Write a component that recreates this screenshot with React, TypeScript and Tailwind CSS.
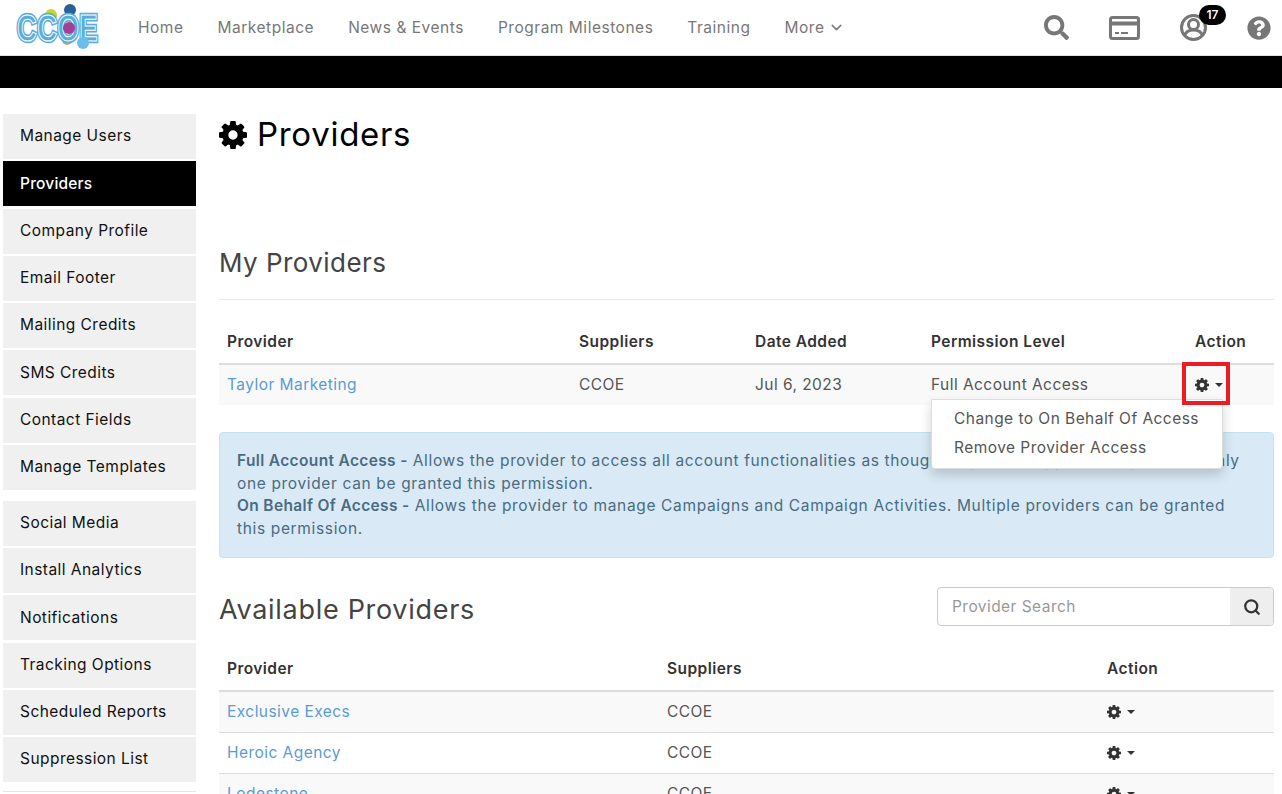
import { ChevronDown, Search } from 'lucide-react';
import { FaSearch, FaQuestionCircle } from 'react-icons/fa';

const navLinks = ['Home', 'Marketplace', 'News & Events', 'Program Milestones', 'Training'];
const sideTop = ['Manage Users', 'Providers', 'Company Profile', 'Email Footer', 'Mailing Credits', 'SMS Credits', 'Contact Fields', 'Manage Templates'];
const sideBottom = ['Social Media', 'Install Analytics', 'Notifications', 'Tracking Options', 'Scheduled Reports', 'Suppression List'];
const available = ['Exclusive Execs', 'Heroic Agency', 'Lodestone'];

function Gear({ className }: { className: string }) {
  return (
    <svg viewBox="128 128 1536 1536" className={className} fill="currentColor" fillRule="evenodd">
      <path d="M1152 896q0-106-75-181t-181-75-181 75-75 181 75 181 181 75 181-75 75-181zm512-109v222q0 12-8 23t-20 13l-185 28q-19 54-39 91 35 50 107 138 10 12 10 25t-9 23q-27 37-99 108t-94 71q-12 0-26-9l-138-108q-44 23-91 38-16 136-29 186-7 28-36 28h-222q-14 0-24.500-8.500t-11.500-21.500l-28-184q-49-16-90-37l-141 107q-10 9-25 9-14 0-25-11-126-114-165-168-7-10-7-23 0-12 8-23 15-21 51-66.500t54-70.500q-27-50-41-99l-183-27q-13-2-21-12.500t-8-23.500v-222q0-12 8-23t19-13l186-28q14-46 39-92-40-57-107-138-10-12-10-24 0-10 9-23 26-36 98.500-107.500t94.500-71.500q13 0 26 10l138 107q44-23 91-38 16-136 29-186 7-28 36-28h222q14 0 24.500 8.500t11.500 21.500l28 184q49 16 90 37l142-107q9-9 24-9 13 0 25 10 129 119 165 170 7 8 7 22 0 12-8 23-15 21-51 66.500t-54 70.500q26 50 41 98l183 28q13 2 21 12.500t8 23.500z" />
    </svg>
  );
}

function Logo() {
  return (
    <svg width="90" height="52" viewBox="0 0 90 52" className="ml-[14px] shrink-0">
      <circle cx="37" cy="13" r="6" fill="#c9d33f" />
      <circle cx="56" cy="8" r="6" fill="#2a6099" />
      <circle cx="53" cy="38" r="5" fill="#c9a25a" />
      <text x="3" y="39" fontFamily="'Liberation Sans', sans-serif" fontSize="37" fontWeight="700" fill="#5badd9" stroke="#5badd9" strokeWidth="4.5" textLength="81" lengthAdjust="spacingAndGlyphs">CCOE</text>
      <text aria-hidden="true" x="3" y="39" fontFamily="'Liberation Sans', sans-serif" fontSize="37" fontWeight="700" fill="none" stroke="#ffffff" strokeWidth="1" textLength="81" lengthAdjust="spacingAndGlyphs">CCOE</text>
      <circle cx="55" cy="26" r="6" fill="#a23f97" />
      <circle cx="69" cy="41" r="6" fill="#6bbdec" />
    </svg>
  );
}

function SideItem({ label, active }: { label: string; active?: boolean }) {
  return (
    <a className={`flex h-[45px] mb-[2.25px] items-center pl-[17px] pb-[1px] text-[15.5px] ${active ? 'bg-black text-white font-medium tracking-[0.2px]' : 'bg-[#f0f0f0] text-[#111]'}`}>
      {label}
    </a>
  );
}

function ActionCog() {
  return (
    <span className="flex items-center gap-[6px] text-[#333]">
      <Gear className="w-[14px] h-[14px]" />
      <span className="w-0 h-0 border-x-[4px] border-x-transparent border-t-[4px] border-t-[#333]" />
    </span>
  );
}

export default function App() {
  return (
    <div className="relative h-[794px] overflow-hidden bg-white font-['Inter','Liberation_Sans',sans-serif] tracking-[0.45px] text-[15.5px] text-[#555]">
      <header className="flex h-[56px] items-center border-b border-[#e0e0e0]">
        <Logo />
        <nav className="ml-[34px] flex items-center gap-[34px] tracking-[0.52px] text-[#777]">
          {navLinks.map((n) => (
            <a key={n}>{n}</a>
          ))}
          <a className="flex items-center gap-[3px]">
            More <ChevronDown className="w-[17px] h-[17px]" />
          </a>
        </nav>
        <div className="ml-auto flex items-center text-[#777]">
          <FaSearch className="w-[25px] h-[25px]" />
          <svg width="31" height="24" viewBox="0 0 31 24" className="ml-[40px]" fill="none" stroke="#777" strokeWidth="3">
            <rect x="1.5" y="1.5" width="28" height="21" rx="2" />
            <path d="M2 7.5h27" strokeWidth="4" />
            <path d="M6 17h4M12 17h7" strokeWidth="2" />
          </svg>
          <div className="relative ml-[40px] w-[27px] h-[27px]">
            <svg width="27" height="27" viewBox="0 0 27 27" fill="none" stroke="#777" strokeWidth="3">
              <circle cx="13.5" cy="13.5" r="12" />
              <circle cx="13.5" cy="10.5" r="5" />
              <path d="M4.5 22c1-4 4-6 9-6s8 2 9 6" />
            </svg>
            <span className="absolute -top-[9px] left-[19px] flex h-[20px] w-[27px] items-center justify-center rounded-full bg-black text-[12px] font-semibold tracking-normal text-white">17</span>
          </div>
          <FaQuestionCircle className="ml-[40px] mr-[11px] w-[24px] h-[24px]" />
        </div>
      </header>
      <div className="h-[32px] bg-black" />

      <div className="flex pt-[26px]">
        <aside className="ml-[3px] w-[193px] shrink-0">
          <div className="mb-[11px]">
            {sideTop.map((s) => (
              <SideItem key={s} label={s} active={s === 'Providers'} />
            ))}
          </div>
          <div>
            {sideBottom.map((s) => (
              <SideItem key={s} label={s} />
            ))}
          </div>
          <div className="mt-[9px] border-t border-[#e5e5e5]" />
        </aside>

        <main className="ml-[23px] w-[1055px]">
          <h1 className="flex h-[42px] items-center gap-[10px] text-[33px] tracking-[0.7px] text-black">
            <Gear className="w-[28px] h-[28px]" /> Providers
          </h1>
          <h2 className="mt-[89px] h-[55px] text-[26px] leading-[36px] text-[#444]">My Providers</h2>
          <div className="mt-[-1px] border-t border-[#e8e8e8]" />

          <div className="mt-[23px] grid h-[42px] grid-cols-[352px_176px_176px_264px_1fr] items-center border-b-2 border-[#ddd] pb-[3px] pl-[8px] font-semibold text-[#333]">
            <span>Provider</span>
            <span>Suppliers</span>
            <span>Date Added</span>
            <span>Permission Level</span>
            <span>Action</span>
          </div>
          <div className="grid h-[40px] grid-cols-[352px_176px_176px_264px_1fr] items-center bg-[#f9f9f9] pl-[8px]">
            <a className="text-[#5b9bd5]">Taylor Marketing</a>
            <span>CCOE</span>
            <span>Jul 6, 2023</span>
            <span>Full Account Access</span>
            <ActionCog />
          </div>

          <div className="mt-[27px] h-[126px] rounded-[4px] border border-[#c5e3ef] bg-[#d9eaf6] px-[17px] pt-[17px] leading-[22.5px] tracking-[0.65px] text-[#4a6b82]">
            <b className="font-semibold tracking-[0.35px]">Full Account Access -</b> Allows the provider to access all account functionalities as though they were logged in as yourself. Only one provider can be granted this permission.
            <br />
            <b className="font-semibold tracking-[0.35px]">On Behalf Of Access -</b> Allows the provider to manage Campaigns and Campaign Activities. Multiple providers can be granted this permission.
          </div>

          <div className="mt-[29px] flex h-[40px] items-center justify-between">
            <h2 className="mt-[6px] text-[27px] tracking-[0.7px] text-[#444]">Available Providers</h2>
            <div className="-mt-[1px] flex h-[39px] w-[337px] overflow-hidden rounded-[4px] border border-[#ccc]">
              <input className="min-w-0 flex-1 px-[14px] outline-none placeholder:text-[#999]" placeholder="Provider Search" readOnly />
              <span className="flex w-[43px] items-center justify-center bg-[#eee] text-[#333]">
                <Search className="w-[18px] h-[18px]" strokeWidth={3} />
              </span>
            </div>
          </div>

          <div className="mt-[22px] grid h-[43px] grid-cols-[440px_440px_1fr] items-center border-b-2 border-[#ddd] pb-[2px] pl-[8px] font-semibold text-[#333]">
            <span>Provider</span>
            <span>Suppliers</span>
            <span>Action</span>
          </div>
          {available.map((p, i) => (
            <div key={p} className={`grid h-[41px] grid-cols-[440px_440px_1fr] items-center border-b border-[#ddd] pl-[8px] ${i % 2 === 0 ? 'bg-[#f9f9f9]' : 'bg-white'}`}>
              <a className="text-[#5b9bd5]">{p}</a>
              <span>CCOE</span>
              <ActionCog />
            </div>
          ))}
        </main>
      </div>

      {/* open action menu + red highlight drawn on top of the screenshot */}
      <div className="absolute left-[931px] top-[399px] w-[292px] rounded-b-[4px] border border-[#ddd] bg-white py-[5px] pl-[22px] text-[#555] shadow-[0_6px_12px_rgba(0,0,0,0.175)]">
        <div className="h-[29px] leading-[28px]">Change to On Behalf Of Access</div>
        <div className="h-[29px] leading-[28px]">Remove Provider Access</div>
      </div>
      <div className="absolute left-[1182px] top-[362px] h-[43px] w-[48px] border-[4px] border-[#ed1c24]" />
    </div>
  );
}
